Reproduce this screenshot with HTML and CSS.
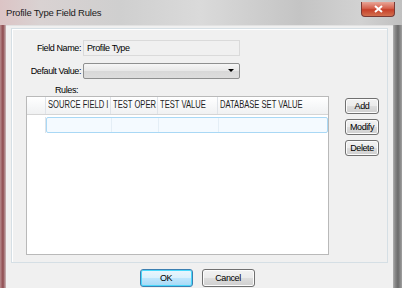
FILE: index.html
```html
<!DOCTYPE html>
<html lang="en">
<head>
    <meta charset="UTF-8">
    <meta name="viewport" content="width=device-width, initial-scale=1.0">
    <title>Profile Type Field Rules</title>
    <link rel="stylesheet" href="styles.css">
</head>
<body>

    <div class="window">
        <div class="titlebar">
            <span class="title">Profile Type Field Rules</span>
            <span class="close-btn">
                <svg width="9" height="8" viewBox="0 0 9 8">
                    <path d="M1 1 L8 7 M8 1 L1 7" stroke="#fff" stroke-width="2"/>
                </svg>
            </span>
        </div>

        <div class="client">
            <div class="group">
                <div class="field-row">
                    <label class="field-label">Field Name:</label>
                    <div class="text-box">Profile Type</div>
                </div>
                <div class="field-row">
                    <label class="field-label">Default Value:</label>
                    <div class="combo">
                        <span class="combo-arrow"></span>
                    </div>
                </div>
                <div class="rules-label">Rules:</div>

                <div class="rules-area">
                    <div class="grid">
                        <div class="grid-head">
                            <div class="cell sel"></div>
                            <div class="cell c1"><span class="squeeze">SOURCE FIELD I</span></div>
                            <div class="cell c2"><span class="squeeze">TEST OPER</span></div>
                            <div class="cell c3"><span class="squeeze">TEST VALUE</span></div>
                            <div class="cell c4"><span class="squeeze">DATABASE SET VALUE</span></div>
                        </div>
                        <div class="grid-row">
                            <div class="cell sel"></div>
                            <div class="row-cells">
                                <div class="cell c1"></div>
                                <div class="cell c2"></div>
                                <div class="cell c3"></div>
                                <div class="cell c4"></div>
                            </div>
                        </div>
                    </div>

                    <div class="side-buttons">
                        <button class="btn small">Add</button>
                        <button class="btn small">Modify</button>
                        <button class="btn small">Delete</button>
                    </div>
                </div>
            </div>

            <div class="footer">
                <button class="btn wide default">OK</button>
                <button class="btn wide">Cancel</button>
            </div>
        </div>
    </div>

</body>
</html>
```

FILE: styles.css
```css
body {
    margin: 0;
    width: 402px;
    height: 288px;
    overflow: hidden;
    font-family: "Liberation Sans", Arial, sans-serif;
    font-size: 9px;
    color: #000;
}

.window {
    display: flex;
    flex-direction: column;
    height: 288px;
    background: linear-gradient(90deg, #b98c8e 0px, #8e4a4e 3px, #cbb9ba 6px, #c9c9c9 120px, #d4d4d4 250px, #c4c4c4 392px, #8a8a8a 395px, #6a6a6a 398px, #a0a0a0 402px);
}

.titlebar {
    height: 25px;
    display: flex;
    align-items: flex-start;
    padding-left: 6px;
    background: linear-gradient(90deg, #dcc4c5 0px, #d9d2d2 40px, #cfcfcf 120px, #dadada 200px, #c4c4c4 300px, #d2d2d2 360px, #c0c0c0 100%);
}

.title {
    margin-top: 7px;
    font-size: 9.5px;
    letter-spacing: -0.2px;
    color: #1a1a1a;
}

.close-btn {
    margin-left: auto;
    margin-right: 7px;
    margin-top: 2px;
    width: 34px;
    height: 15px;
    border: 1px solid #7a3a35;
    border-top: none;
    border-radius: 0 0 4px 4px;
    background: linear-gradient(#e8a597, #d5614d 45%, #c7402a 55%, #d2704f);
    display: flex;
    align-items: center;
    justify-content: center;
    box-sizing: border-box;
}

.client {
    flex: 1;
    margin: 0 9px 0 6px;
    background: #f0f0f0;
    border-top: 1px solid #e2e2e2;
    padding: 2px 5px 0 5px;
    display: flex;
    flex-direction: column;
}

.group {
    border: 1px solid #d5dfe5;
    box-shadow: inset 1px 1px 0 #fff;
    padding: 11px 0 0 0;
    box-sizing: border-box;
    height: 235px;
}

.field-row {
    display: flex;
    align-items: center;
    margin-bottom: 7px;
}

.field-label {
    width: 69px;
    text-align: right;
    padding-right: 2px;
    letter-spacing: -0.4px;
}

.text-box {
    width: 157px;
    height: 16px;
    box-sizing: border-box;
    border: 1px solid #dadada;
    background: #f0f0f0;
    padding: 2px 3px;
    letter-spacing: -0.4px;
}

.combo {
    width: 157px;
    height: 16px;
    box-sizing: border-box;
    border: 1px solid #8e8f8f;
    border-radius: 2px;
    background: linear-gradient(#f6f6f6, #e7e7e7 50%, #d8d8d8 51%, #dddddd);
    position: relative;
}

.combo-arrow {
    position: absolute;
    right: 5px;
    top: 5px;
    width: 0;
    height: 0;
    border-left: 3px solid transparent;
    border-right: 3px solid transparent;
    border-top: 3px solid #000;
}

.rules-label {
    margin-left: 43px;
    height: 9px;
    line-height: 9px;
    letter-spacing: -0.4px;
}

.rules-area {
    display: flex;
    margin-top: 1px;
}

.grid {
    margin-left: 14px;
    width: 303px;
    height: 159px;
    box-sizing: border-box;
    border: 1px solid #b9b9b9;
    background: #fff;
}

.grid-head {
    display: flex;
    height: 17px;
    background: linear-gradient(#ffffff, #f7f8f9 50%, #f0f1f2);
    border-bottom: 1px solid #d5d5d5;
}

.cell {
    box-sizing: border-box;
    border-right: 1px solid #dfe3e8;
    padding-left: 2px;
    line-height: 16px;
    white-space: nowrap;
}

.grid-head .cell {
    overflow: hidden;
}

.squeeze {
    display: inline-block;
    font-size: 10px;
    transform: scaleX(0.76);
    transform-origin: left center;
    color: #1e1e1e;
}

.sel {
    width: 19px;
    flex: none;
}

.c1 { width: 65px; }
.c2 { width: 47px; }
.c3 { width: 60px; }
.c4 { width: 109px; border-right: none; }

.grid-row {
    display: flex;
    height: 16px;
    margin-top: 2px;
}

.row-cells {
    display: flex;
    border: 1px solid #a9d8f5;
    border-radius: 2px;
    background: #f4faff;
    height: 16px;
    box-sizing: border-box;
}

.row-cells .cell {
    border-right: 1px solid #e4eef6;
}

.row-cells .c4 {
    width: 108px;
    border-right: none;
}

.side-buttons {
    display: flex;
    flex-direction: column;
    gap: 5px;
    margin-left: 16px;
    margin-top: 2px;
}

.btn {
    font-family: "Liberation Sans", Arial, sans-serif;
    font-size: 9px;
    letter-spacing: -0.4px;
    color: #000;
    border: 1px solid #707070;
    border-radius: 3px;
    background: linear-gradient(#f2f2f2, #ebebeb 50%, #dddddd 51%, #cfcfcf);
    box-shadow: inset 0 0 0 1px #fcfcfc;
    padding: 0;
    cursor: pointer;
}

.small {
    width: 34px;
    height: 16px;
}

.footer {
    display: flex;
    justify-content: center;
    gap: 9px;
    margin-top: 6px;
    padding-right: 5px;
}

.wide {
    width: 53px;
    height: 18px;
}

.default {
    border-color: #3c7fb1;
    background: linear-gradient(#eaf6fd, #d9f0fc 50%, #bee6fd 51%, #a7d9f5);
    box-shadow: inset 0 0 0 1px #48d8fb;
}
```
